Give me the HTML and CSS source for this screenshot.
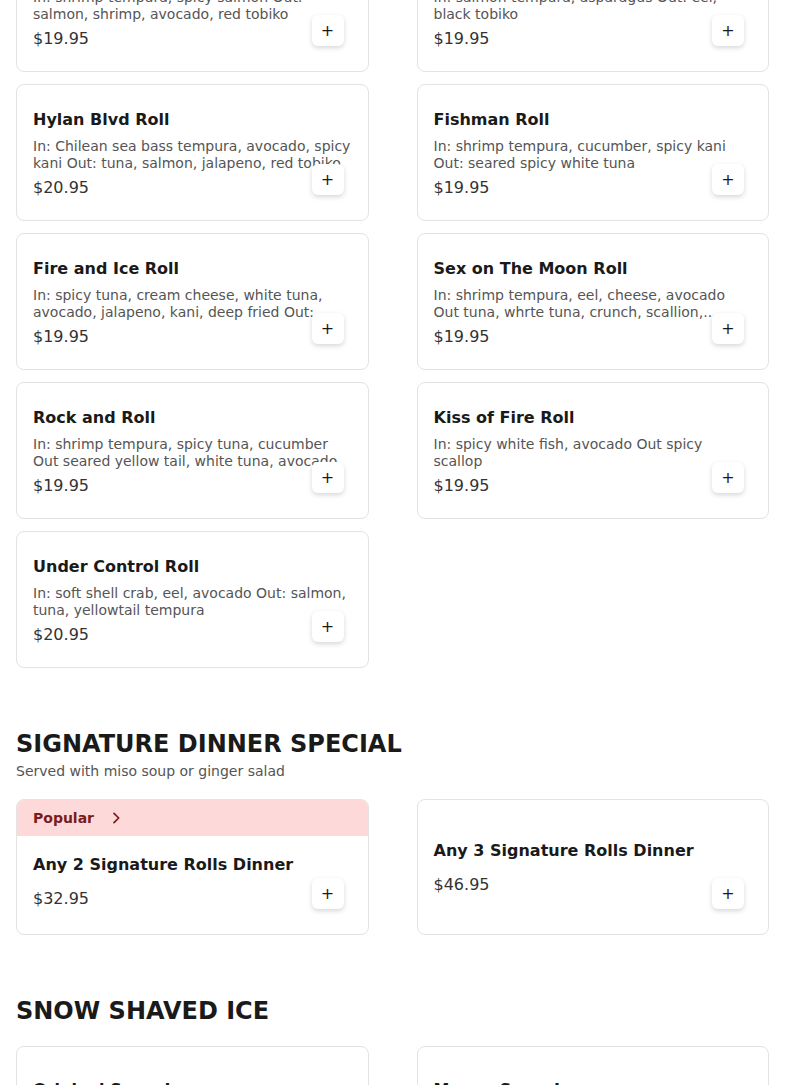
FILE: index.html
```html
<html>
<head>
    <title>Menu</title>
    <link rel="stylesheet" href="styles.css">
</head>
<body>
    <div class="menu-page">
        <div class="section section-first">
            <div class="items">
                <div class="item">
                    <div class="item-body">
                        <div class="item-name">Volcano Roll</div>
                        <div class="item-desc">In: shrimp tempura, spicy salmon Out: salmon, shrimp, avocado, red tobiko</div>
                        <div class="item-price">$19.95</div>
                    </div>
                    <div class="add-btn">+</div>
                </div>
                <div class="item">
                    <div class="item-body">
                        <div class="item-name">Dragon Roll</div>
                        <div class="item-desc">In: salmon tempura, asparagus Out: eel, black tobiko</div>
                        <div class="item-price">$19.95</div>
                    </div>
                    <div class="add-btn">+</div>
                </div>
                <div class="item">
                    <div class="item-body">
                        <div class="item-name">Hylan Blvd Roll</div>
                        <div class="item-desc">In: Chilean sea bass tempura, avocado, spicy kani Out: tuna, salmon, jalapeno, red tobiko</div>
                        <div class="item-price">$20.95</div>
                    </div>
                    <div class="add-btn">+</div>
                </div>
                <div class="item">
                    <div class="item-body">
                        <div class="item-name">Fishman Roll</div>
                        <div class="item-desc">In: shrimp tempura, cucumber, spicy kani Out: seared spicy white tuna</div>
                        <div class="item-price">$19.95</div>
                    </div>
                    <div class="add-btn">+</div>
                </div>
                <div class="item">
                    <div class="item-body">
                        <div class="item-name">Fire and Ice Roll</div>
                        <div class="item-desc">In: spicy tuna, cream cheese, white tuna, avocado, jalapeno, kani, deep fried Out: spicy crab, eel sauce, spicy mayo</div>
                        <div class="item-price">$19.95</div>
                    </div>
                    <div class="add-btn">+</div>
                </div>
                <div class="item">
                    <div class="item-body">
                        <div class="item-name">Sex on The Moon Roll</div>
                        <div class="item-desc">In: shrimp tempura, eel, cheese, avocado Out tuna, whrte tuna, crunch, scallion,... spicy mayo, eel sauce</div>
                        <div class="item-price">$19.95</div>
                    </div>
                    <div class="add-btn">+</div>
                </div>
                <div class="item">
                    <div class="item-body">
                        <div class="item-name">Rock and Roll</div>
                        <div class="item-desc">In: shrimp tempura, spicy tuna, cucumber Out seared yellow tail, white tuna, avocado</div>
                        <div class="item-price">$19.95</div>
                    </div>
                    <div class="add-btn">+</div>
                </div>
                <div class="item">
                    <div class="item-body">
                        <div class="item-name">Kiss of Fire Roll</div>
                        <div class="item-desc">In: spicy white fish, avocado Out spicy scallop</div>
                        <div class="item-price">$19.95</div>
                    </div>
                    <div class="add-btn">+</div>
                </div>
                <div class="item">
                    <div class="item-body">
                        <div class="item-name">Under Control Roll</div>
                        <div class="item-desc">In: soft shell crab, eel, avocado Out: salmon, tuna, yellowtail tempura</div>
                        <div class="item-price">$20.95</div>
                    </div>
                    <div class="add-btn">+</div>
                </div>
            </div>
        </div>

        <div class="section">
            <h2 class="section-title">SIGNATURE DINNER SPECIAL</h2>
            <div class="section-sub">Served with miso soup or ginger salad</div>
            <div class="items items-short">
                <div class="item item-popular">
                    <div class="popular">
                        <span>Popular</span>
                        <svg width="16" height="16" viewBox="0 0 24 24" fill="none" stroke="#7a1c1c" stroke-width="2.6" stroke-linecap="round" stroke-linejoin="round"><path d="M9 5l7 7-7 7"/></svg>
                    </div>
                    <div class="item-body">
                        <div class="item-name">Any 2 Signature Rolls Dinner</div>
                        <div class="item-price">$32.95</div>
                    </div>
                    <div class="add-btn">+</div>
                </div>
                <div class="item">
                    <div class="item-body">
                        <div class="item-name">Any 3 Signature Rolls Dinner</div>
                        <div class="item-price">$46.95</div>
                    </div>
                    <div class="add-btn">+</div>
                </div>
            </div>
        </div>

        <div class="section">
            <h2 class="section-title">SNOW SHAVED ICE</h2>
            <div class="items">
                <div class="item">
                    <div class="item-body">
                        <div class="item-name">Original Snow Ice</div>
                        <div class="item-desc">Milk snow with condensed milk</div>
                        <div class="item-price">$8.95</div>
                    </div>
                    <div class="add-btn">+</div>
                </div>
                <div class="item">
                    <div class="item-body">
                        <div class="item-name">Mango Snow Ice</div>
                        <div class="item-desc">Fresh mango, mango syrup</div>
                        <div class="item-price">$9.95</div>
                    </div>
                    <div class="add-btn">+</div>
                </div>
            </div>
        </div>
    </div>
</body>
</html>
```

FILE: styles.css
```css
body {
    margin: 0;
    padding: 0;
    font-family: "DejaVu Sans", Verdana, sans-serif;
    background-color: #ffffff;
    color: #1a1a1a;
}
.menu-page {
    padding: 0 16px 40px;
}
.section {
    margin-top: 60px;
}
.section-first {
    margin-top: -65px;
}
.section-title {
    margin: 0;
    font-size: 24px;
    line-height: 32px;
    font-weight: bold;
    color: #1a1a1a;
}
.section-sub {
    margin-top: 1px;
    font-size: 14px;
    line-height: 20px;
    color: #555555;
}
.section-title + .items {
    margin-top: 19px;
}
.section-sub + .items {
    margin-top: 18px;
}
.items {
    display: grid;
    grid-template-columns: 1fr 1fr;
    column-gap: 48px;
    row-gap: 12px;
}
.item {
    position: relative;
    display: flex;
    flex-direction: column;
    min-height: 137px;
    box-sizing: border-box;
    border: 1px solid #e3e3e3;
    border-radius: 8px;
    background-color: #ffffff;
    overflow: hidden;
}
.items-short .item {
    min-height: 136px;
}
.item-body {
    flex: 1;
    display: flex;
    flex-direction: column;
    justify-content: center;
    padding: 17px 16px 15px;
}
.item-popular .item-body {
    justify-content: flex-start;
    padding-top: 17px;
}
.item-name {
    font-size: 16px;
    line-height: 24px;
    font-weight: bold;
    color: #1a1a1a;
}
.item-desc {
    margin-top: 6px;
    font-size: 14px;
    line-height: 17px;
    color: #555555;
    display: -webkit-box;
    -webkit-line-clamp: 2;
    -webkit-box-orient: vertical;
    overflow: hidden;
}
.item-price {
    margin-top: 4px;
    font-size: 16px;
    line-height: 24px;
    color: #333333;
}
.item-name + .item-price {
    margin-top: 10px;
}
.add-btn {
    position: absolute;
    right: 24px;
    bottom: 25px;
    width: 32px;
    height: 31px;
    display: flex;
    justify-content: center;
    align-items: center;
    background-color: #ffffff;
    border-radius: 6px;
    box-shadow: 0 2px 5px rgba(0, 0, 0, 0.16);
    font-size: 16px;
    color: #1a1a1a;
}
.popular {
    display: flex;
    align-items: center;
    gap: 14px;
    height: 36px;
    padding: 0 16px;
    background-color: #fdd9d9;
    color: #7a1c1c;
    font-size: 14px;
    font-weight: bold;
}
```
